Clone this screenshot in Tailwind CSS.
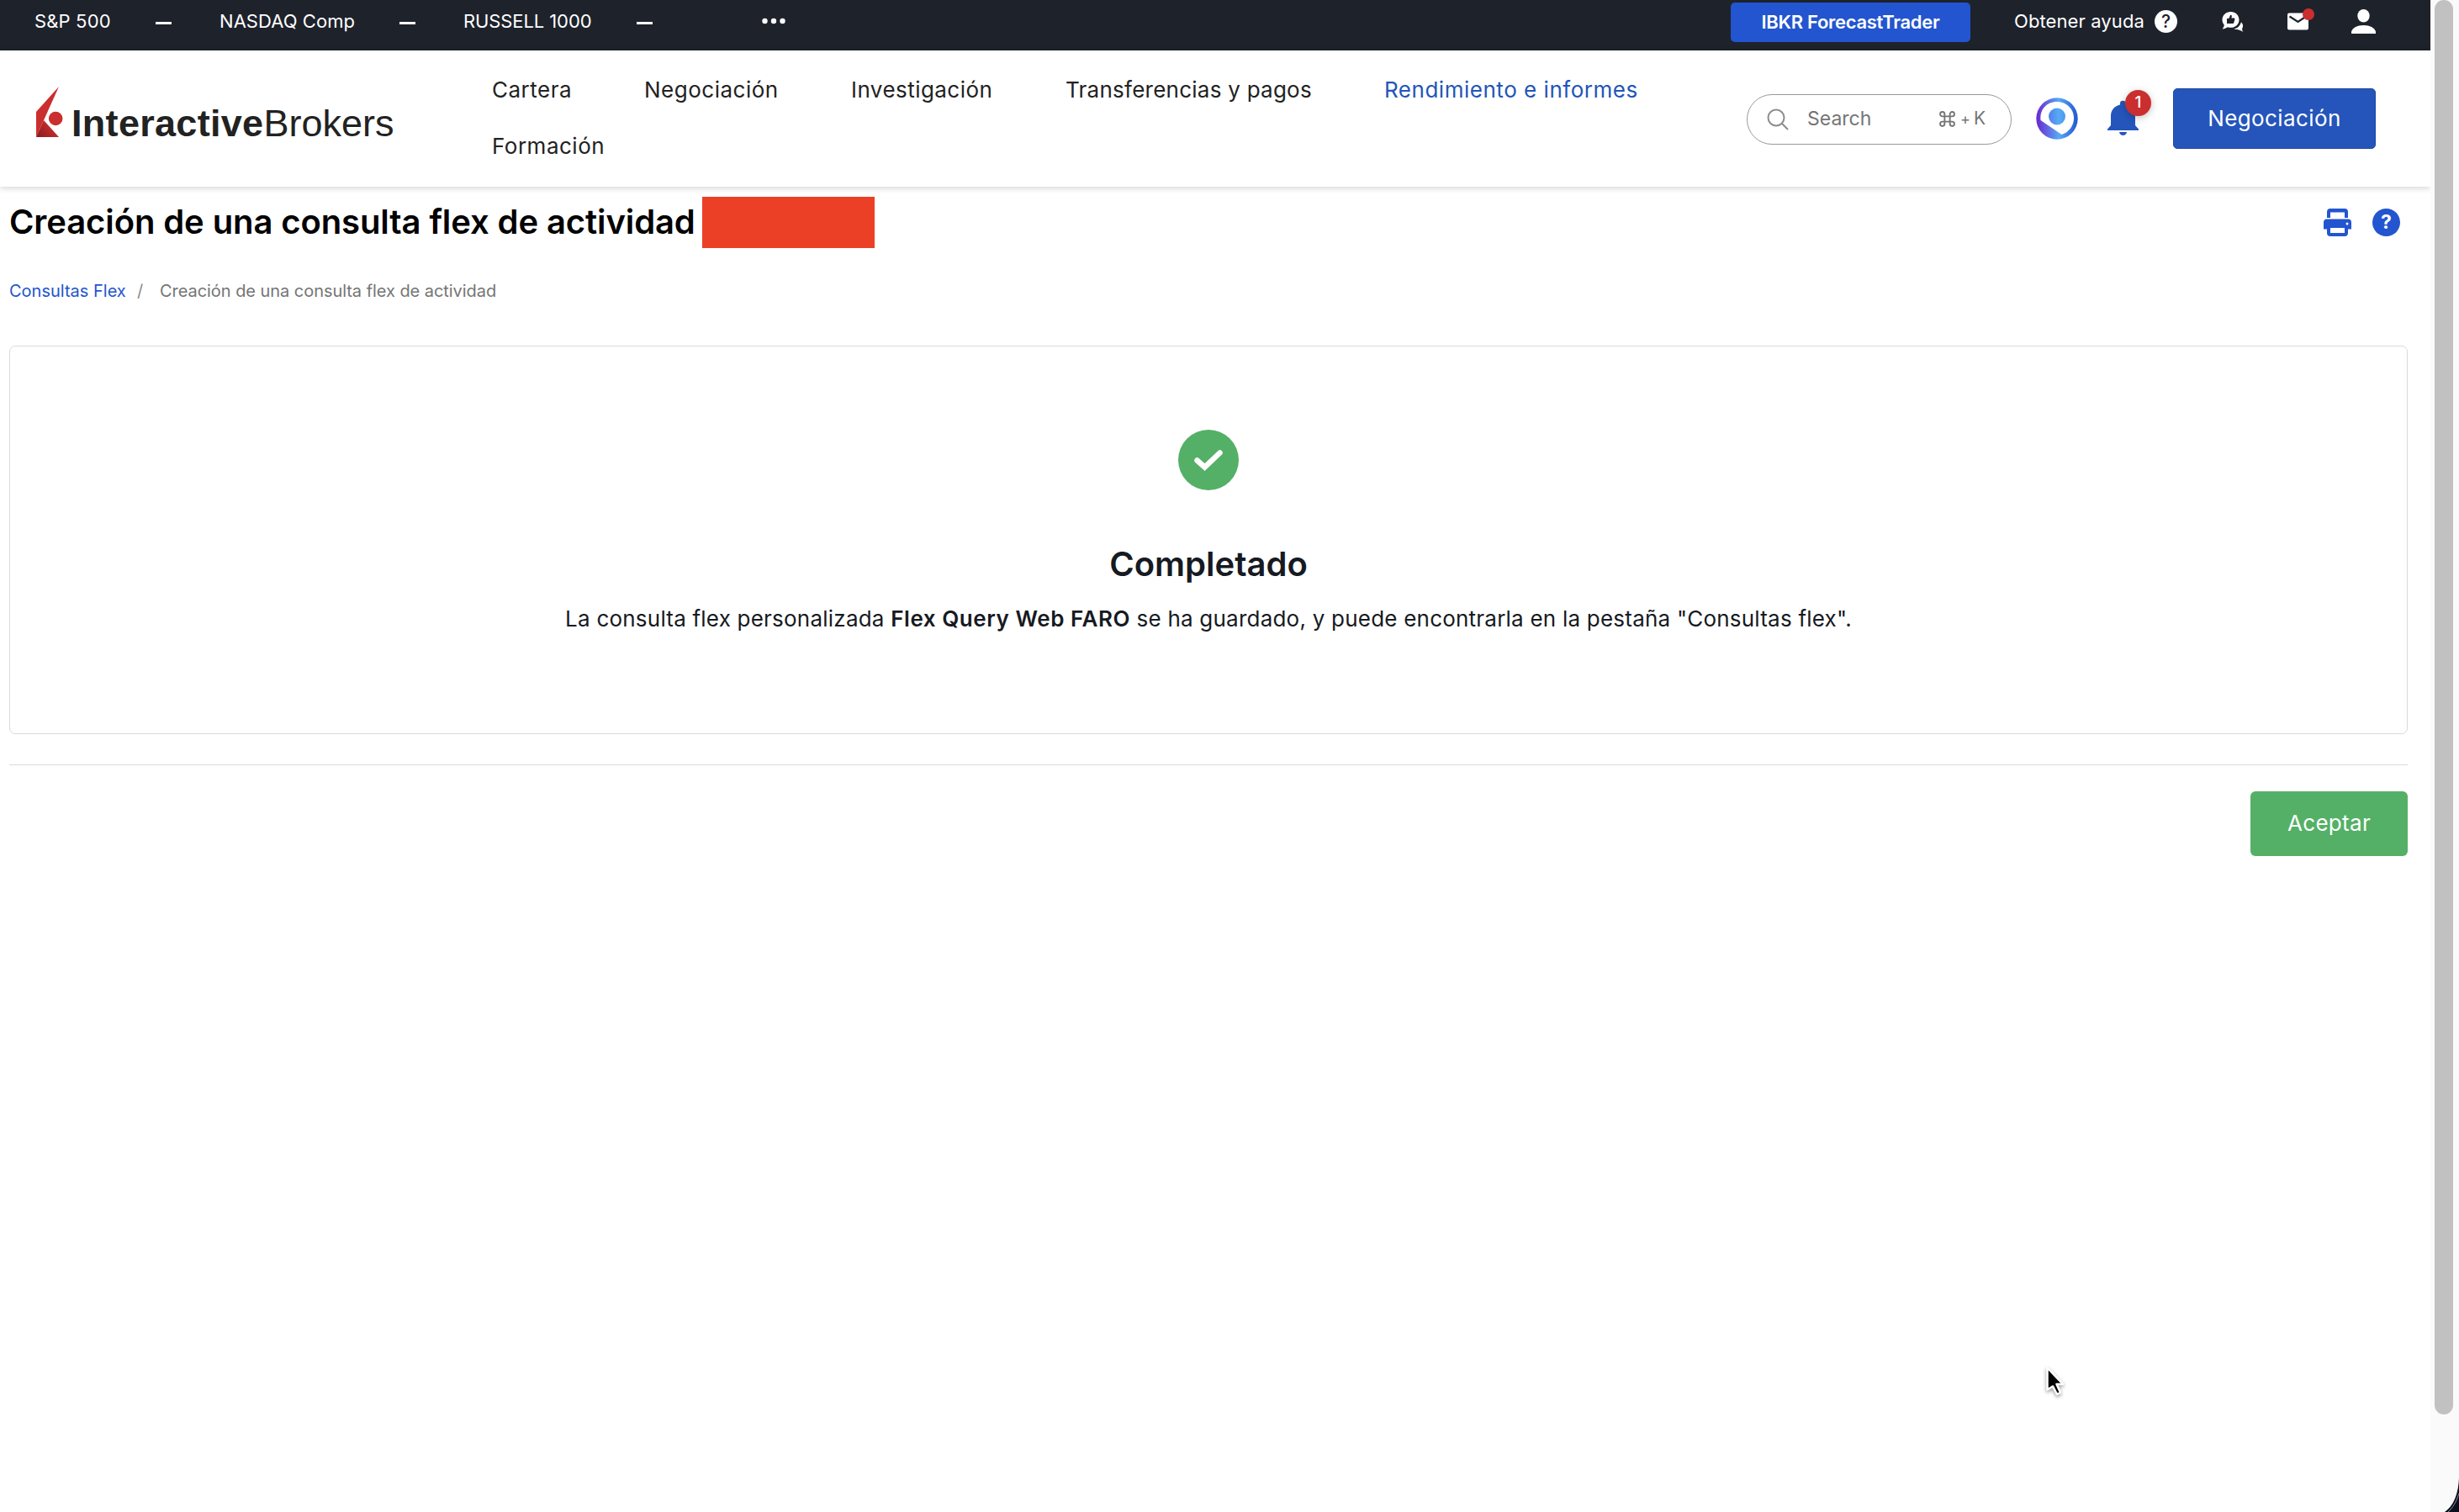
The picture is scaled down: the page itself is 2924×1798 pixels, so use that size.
<!DOCTYPE html>
<html lang="es">
<head>
    <meta charset="UTF-8">
    <meta name="viewport" content="width=device-width, initial-scale=1.0">
    <title>Interactive Brokers - Consultas Flex</title>
    <script src="https://cdn.jsdelivr.net/npm/@tailwindcss/browser@4"></script>
</head>
<body class="relative flex h-[1798px] w-[2924px] overflow-hidden bg-white font-['Inter',sans-serif] text-[#222]">
    <div class="flex w-[2890px] flex-col">

        <!-- Market ticker bar -->
        <div class="flex h-[60px] items-start bg-[#1e222b] pl-10 text-[22px] leading-[51px] text-white">
            <span class="w-[145px] pl-px tracking-[0.15px]">S&amp;P 500</span>
            <span class="mt-[26px] h-[3px] w-[19px] bg-white"></span>
            <span class="ml-[57px] w-[214px] tracking-[0.05px]">NASDAQ Comp</span>
            <span class="mt-[26px] h-[3px] w-[19px] bg-white"></span>
            <span class="ml-[57px] w-[206px] tracking-[-0.1px]">RUSSELL 1000</span>
            <span class="mt-[26px] h-[3px] w-[19px] bg-white"></span>
            <svg class="ml-[130px] mt-[21px] h-2 w-7" viewBox="0 0 28 8" fill="#fff">
                <circle cx="3.5" cy="4" r="3.2"></circle>
                <circle cx="14" cy="4" r="3.2"></circle>
                <circle cx="24.5" cy="4" r="3.2"></circle>
            </svg>

            <button class="ml-auto mt-[3px] h-[47px] w-[285px] rounded-[5px] bg-[#2255cf] leading-[45px] font-semibold tracking-[-0.3px]">IBKR ForecastTrader</button>
            <span class="ml-[52px] w-[167px] tracking-[0.1px]">Obtener ayuda</span>
            <span class="mt-3 size-[27px] rounded-full bg-white text-center text-[21px] leading-[27px] font-medium text-[#1e222b]">?</span>
            <!-- Feedback bubbles -->
            <svg class="ml-[52px] mt-[13px] mr-px h-[26px] w-[27px]" viewBox="0 0 27 26">
                <path d="M19 22c3 .6 5 1.800 7.500 3-1.200-1.400-1.500-2.600-1.300-4.200 1.500-2.500 1.200-5-1.200-7.500-1.500 5-4.500 7.500-9 8.300 1 .4 2.500.6 4 .4z" fill="#fff"></path>
                <path d="M11.500 1C6 1 1.500 5 1.500 10.500c0 2.500.9 4.500 2.300 6.200-.2 1.600-.9 3-2.300 4.800 2.600-.3 4.600-1 6.500-2.200 1.100.4 2.200.5 3.500.5 5.800 0 10-4 10-9.400S17.200 1 11.500 1z" fill="#fff"></path>
                <path d="M7 9h2.300l1.900-4.200c1.400 0 1.900.9 1.600 2L12.400 8.600h3c.8 0 1.200.7 1 1.400l-1.100 4c-.2.700-.6 1-1.300 1H7z" fill="#1e222b"></path>
            </svg>
            <!-- Mail with unread dot -->
            <svg class="ml-[50px] mt-[8px] h-7 w-9" viewBox="0 0 36 28">
                <rect x="1" y="7.500" width="25" height="20" rx="2" fill="#fff"></rect>
                <path d="M3.500 11.500 13.500 18l9-6" fill="none" stroke="#1e222b" stroke-width="2.200"></path>
                <circle cx="26" cy="9" r="7" fill="#cb2e2e"></circle>
            </svg>
            <svg class="ml-[41px] mr-[65px] mt-[11px] h-[29px] w-[29px]" viewBox="0 0 29 29" fill="#fff">
                <ellipse cx="14.500" cy="7.800" rx="7.200" ry="7.800"></ellipse>
                <path d="M0 29v-2.500C1.500 22 7 19 14.500 19S27.500 22 29 26.500V29z"></path>
            </svg>
        </div>

        <!-- Main navigation -->
        <header class="flex h-[162px] items-start pl-[43px] shadow-[0_1px_8px_rgba(0,0,0,0.2)]">
            <svg class="mt-[43px] h-[60px] w-[32px]" viewBox="0 0 32 60">
                <defs>
                    <linearGradient id="mark" x1="0" y1="1" x2="1" y2="0.3">
                        <stop offset="0" stop-color="#84191c"></stop>
                        <stop offset="0.8" stop-color="#cb2e2e"></stop>
                    </linearGradient>
                </defs>
                <path d="M27 0 0 30v30L9 40z" fill="#cb2e2e"></path>
                <path d="M0 60 9 40 27 60z" fill="url(#mark)"></path>
                <circle cx="23.200" cy="38" r="8.300" fill="#cb2e2e"></circle>
            </svg>
            <div class="ml-[10px] mt-[59px] w-[500px] font-['Liberation_Sans',sans-serif] text-[45px] leading-[56px] whitespace-nowrap"><span class="font-bold tracking-[0.3px]">Interactive</span><span class="tracking-[0px]">Brokers</span></div>
            <nav class="mt-[13px] flex w-[1400px] flex-wrap gap-x-[86px] text-[26px] leading-[67px]">
                <a class="w-[95px] tracking-[0.5px]">Cartera</a>
                <a class="w-[160px] tracking-[0.5px]">Negociación</a>
                <a class="w-[169px] tracking-[0.45px]">Investigación</a>
                <a class="w-[293px] tracking-[0.25px]">Transferencias y pagos</a>
                <a class="w-[303px] tracking-[0.52px] text-[#2255b9]">Rendimiento e informes</a>
                <a class="tracking-[0.5px]">Formación</a>
            </nav>

            <div class="ml-auto mr-[65px] mt-[45px] flex items-start">
                <div class="mt-[7px] flex h-[60px] w-[315px] items-center rounded-full border border-[#999] pl-[23px] text-[22px] text-[#757575]">
                    <svg class="h-[26px] w-[26px]" viewBox="0 0 26 26" fill="none" stroke="#8c8c8c" stroke-width="2">
                        <circle cx="11" cy="11" r="9.500"></circle>
                        <path d="m18 18 7 7"></path>
                    </svg>
                    <span class="ml-[22px] w-[157px] pb-[2px] text-[23px]">Search</span>
                    <svg class="mb-[2px] h-[19px] w-[19px]" viewBox="0 0 18 18" fill="none" stroke="#757575" stroke-width="1.800">
                        <path d="M6 6h6v6H6zM6 6H3.500A2.500 2.500 0 1 1 6 3.500zM12 6V3.500A2.500 2.500 0 1 1 14.500 6zM12 12h2.500a2.500 2.500 0 1 1-2.500 2.500zM6 12v2.500A2.500 2.500 0 1 1 3.500 12z"></path>
                    </svg>
                    <span class="ml-[6px] pb-[2px] text-[18px]">+</span>
                    <span class="ml-[4px] pb-[2px] text-[21px]">K</span>
                </div>
                <!-- Assistant -->
                <svg class="ml-[29px] mt-[11px] h-[50px] w-[50px]" viewBox="0 0 50 50">
                    <defs>
                        <linearGradient id="orb" x1="0" y1="0" x2="1" y2="0">
                            <stop offset="0" stop-color="#6d25cf"></stop>
                            <stop offset="0.550" stop-color="#58aaf6"></stop>
                            <stop offset="1" stop-color="#2255cf"></stop>
                        </linearGradient>
                        <linearGradient id="core" x1="0" y1="0" x2="1" y2="0">
                            <stop offset="0" stop-color="#5280ea"></stop>
                            <stop offset="0.600" stop-color="#58aaf6"></stop>
                            <stop offset="1" stop-color="#4d98ee"></stop>
                        </linearGradient>
                    </defs>
                    <circle cx="25" cy="25" r="24.700" fill="url(#orb)"></circle>
                    <path d="M5.500 27C4 14 13 5 25 5c11.500 0 20 9 20 19.500 0 9-6 17-14.500 19.500z" fill="#fff"></path>
                    <circle cx="25" cy="22.500" r="10" fill="url(#core)"></circle>
                </svg>
                <div class="relative ml-[34px] mt-[14px] h-[44px] w-[40px]">
                    <svg class="h-[44px] w-[40px]" viewBox="0 0 40 44" fill="#2555bb">
                        <path d="M16 4a3.300 3.300 0 0 1 6.600 0v1.600C29.500 7 34 12 34 19v11l4 4.500V36H1v-1.500L5 30V19C5 12 9.500 7 16 5.600z"></path>
                        <path d="M15 38h9c-.5 2.500-2.300 4-4.500 4s-4-1.500-4.500-4z"></path>
                    </svg>
                    <span class="absolute -top-[12px] left-[22px] h-[31px] w-[31px] rounded-full bg-[#cb2e2e] text-center text-[19px] leading-[30px] font-medium text-white shadow-[0_2px_8px_rgba(0,0,0,0.25)]">1</span>
                </div>
                <button class="ml-[39px] h-[72px] w-[241px] rounded-[5px] border border-[#1e4aa3] bg-[#2555bb] pb-[2px] text-[26px] leading-[67px] tracking-[0.4px] text-white">Negociación</button>
            </div>
        </header>

        <main class="px-[11px] pt-[12px]">
            <div class="flex h-[61px] items-center">
                <h1 class="w-[824px] pb-[2px] text-[40px] leading-[60px] font-semibold tracking-[-0.1px] whitespace-nowrap text-black">Creación de una consulta flex de actividad</h1>
                <div class="h-[61px] w-[205px] bg-[#eb4026]"></div>
                <svg class="ml-auto mr-[25px] h-[33px] w-[33px]" viewBox="0 0 33 33" fill="#2255cf">
                    <path d="M4 11V4a4 4 0 0 1 4-4h17a4 4 0 0 1 4 4v7h-4V4.500H8V11z"></path>
                    <path d="M4 12.500h25a4 4 0 0 1 4 4v8h-4V29a4 4 0 0 1-4 4H8a4 4 0 0 1-4-4v-4.500H0v-8a4 4 0 0 1 4-4zM8 23v6h17v-6z"></path>
                    <circle cx="28" cy="18" r="1.500" fill="#fff"></circle>
                </svg>
                <span class="mr-[25px] h-[33px] w-[33px] rounded-full bg-[#2255cf] text-center text-[23px] leading-[33px] font-bold text-white">?</span>
            </div>

            <div class="mt-[36px] flex text-[20px] leading-[30px] whitespace-nowrap">
                <a class="w-[152px] text-[#2255cf]">Consultas Flex</a>
                <span class="w-[27px] text-[#8c8c8c]">/</span>
                <span class="tracking-[-0.05px] text-[#757575]">Creación de una consulta flex de actividad</span>
            </div>

            <section class="mt-[50px] mr-[16px] flex h-[462px] flex-col items-center rounded-[7px] border border-[#d9dadb] text-[#161a22]">
                <svg class="mt-[99px] h-[72px] w-[72px]" viewBox="0 0 72 72">
                    <circle cx="36" cy="36" r="36" fill="#54b066"></circle>
                    <path d="m22.500 36.500 9 8 18-17" fill="none" stroke="#fff" stroke-width="6.500" stroke-linecap="round"></path>
                </svg>
                <h2 class="mt-[58px] text-[40px] leading-[60px] font-semibold">Completado</h2>
                <p class="mt-[15px] text-[26px] leading-[40px] tracking-[0.22px]">La consulta flex personalizada <span class="font-semibold tracking-[0.55px]">Flex Query Web FARO</span> se ha guardado, y puede encontrarla en la pestaña "Consultas flex".</p>
            </section>

            <div class="mt-[36px] mr-[16px] border-t border-[#d9dadb] pt-[31px] text-right">
                <button class="h-[77px] w-[187px] rounded-[6px] bg-[#54b066] pb-[2px] text-[26px] leading-[73px] tracking-[0.3px] text-white">Aceptar</button>
            </div>
        </main>
    </div>

    <!-- Scrollbar -->
    <div class="flex w-[34px] flex-col bg-[#fafafa] pl-[5px]">
        <div class="h-[1682px] w-[22px] rounded-full bg-[#c1c1c1]"></div>
    </div>

    <!-- Window corner -->
    <svg class="absolute right-0 bottom-0 h-[40px] w-[20px]" viewBox="0 0 20 40">
        <path d="M20 0v40H3C13 33 19 20 20 0z" fill="#0b1020"></path>
        <path d="M19.800 18C17 28 12.500 35 7 40" fill="none" stroke="#8b8f98" stroke-width="1"></path>
    </svg>

    <!-- Pointer -->
    <svg class="absolute left-[2431px] top-[1623px] h-[42px] w-[28px] drop-shadow-[0_2px_2px_rgba(0,0,0,0.4)]" viewBox="0 0 28 42">
        <path d="M3.500 3.500v26l6.500-4 5 9.500 4-2-4.500-10H22z" fill="#000" stroke="#fff" stroke-width="2.500" stroke-linejoin="round"></path>
    </svg>
</body>
</html>
